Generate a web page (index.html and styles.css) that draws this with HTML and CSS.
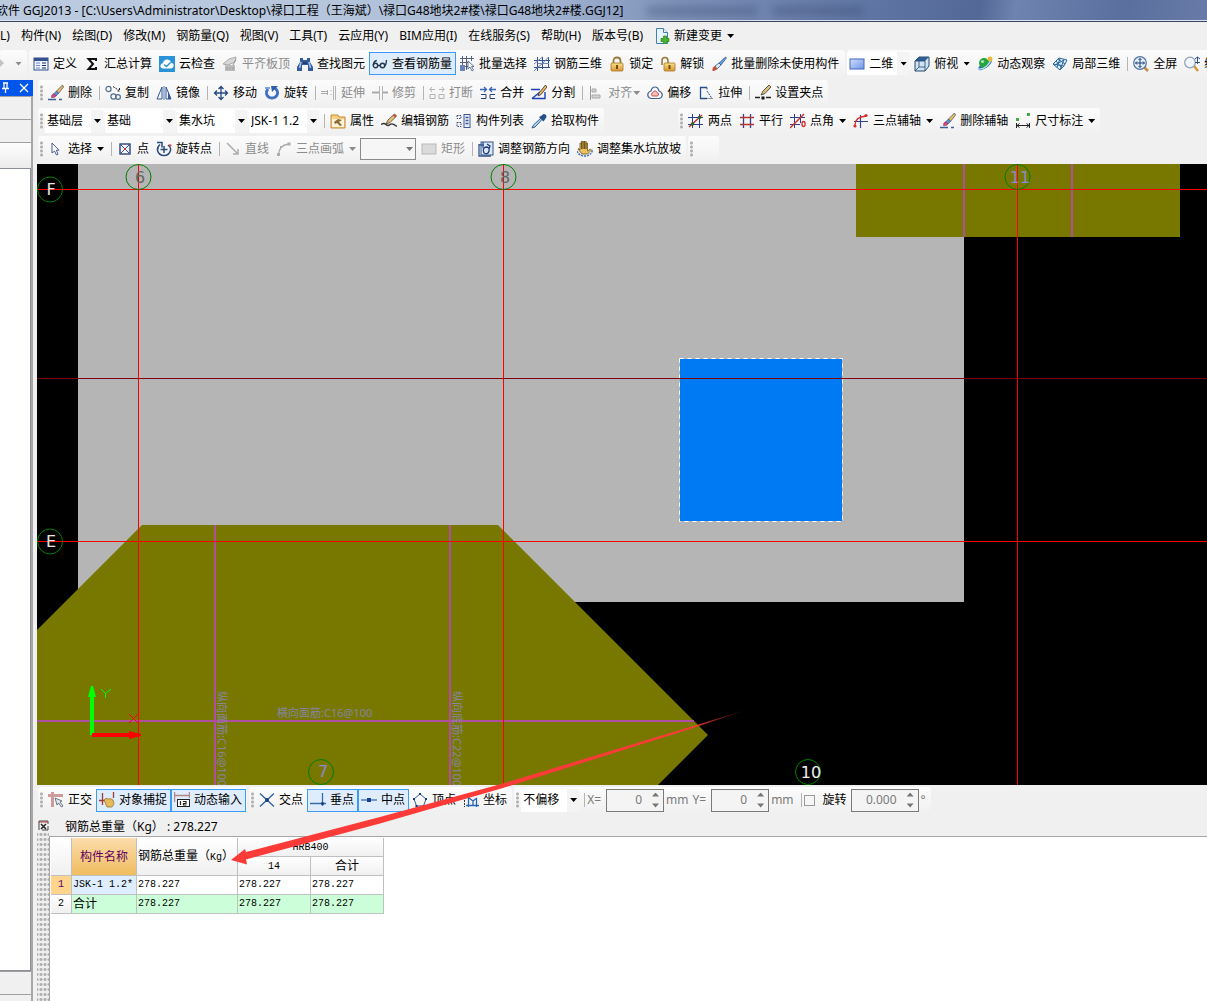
FILE: index.html
```html
<!DOCTYPE html>
<html lang="zh-CN">
<head>
<meta charset="utf-8">
<title>GGJ2013</title>
<link rel="stylesheet" href="styles.css">
</head>
<body>
<svg class="defs" aria-hidden="true">
  <defs>
    <linearGradient id="g-blue" x1="0" y1="0" x2="1" y2="1"><stop offset="0" stop-color="#d3e0fa"/><stop offset="1" stop-color="#6d95ec"/></linearGradient>
    <linearGradient id="g-gold" x1="0" y1="0" x2="0" y2="1"><stop offset="0" stop-color="#fbe08a"/><stop offset="1" stop-color="#d9962c"/></linearGradient>
    <linearGradient id="g-fade" gradientUnits="userSpaceOnUse" x1="751" y1="0" x2="690" y2="0"><stop offset="0" stop-color="#fc3a38" stop-opacity="0"/><stop offset="1" stop-color="#fc3a38"/></linearGradient>
    <symbol id="i-redo" viewBox="0 0 16 16"><path d="M1 12V9q0-4 5-4h3V2l5 5-5 5V8H6q-2 0-2 4z" fill="#c4c4c4"/></symbol>
    <symbol id="i-define" viewBox="0 0 16 16"><rect x="1" y="2" width="14" height="12" fill="#eef3ff" stroke="#35508f"/><path d="M1 3.500h14" stroke="#35508f" stroke-width="3"/><path d="M3 7h4M3 9.500h4M3 12h4" stroke="#6f88c4"/><path d="M9 7h4M9 9.500h4M9 12h4" stroke="#1c2f66"/></symbol>
    <symbol id="i-sum" viewBox="0 0 16 16"><path d="M12 5V3H4.500L9 8l-4.500 5H12v-2" fill="none" stroke="#111" stroke-width="2"/></symbol>
    <symbol id="i-cloud" viewBox="0 0 16 16"><rect width="16" height="16" fill="#2a93d6"/><path d="M4 12.500q-3-.5-2.500-3.200.4-2 2.400-2.100Q4.800 3.500 8 3.500q3.200.1 4 3.300 3 .5 2.700 3-.4 2.500-2.700 2.700z" fill="#fff"/><path d="M5 8.500l2.500 2 4-4" fill="none" stroke="#2a93d6" stroke-width="1.500"/></symbol>
    <symbol id="i-flush" viewBox="0 0 16 16"><path d="M1 8l6-5 7-2-1 5-7 3z" fill="#d8d8d8" stroke="#aaa"/><path d="M3 9h10v6H3z" fill="#bdbdbd"/><path d="M5 11v3M8 11v3M11 11v3M14 3l-3 6" stroke="#999"/></symbol>
    <symbol id="i-find" viewBox="0 0 16 16"><path d="M3 2h3v2h4V2h3v4l3 5v4h-5V9H5v6H0v-4l3-5z" fill="#315b9a"/><path d="M4 6L2.500 12M12 6l1.500 6" stroke="#a9c4ea" stroke-width="1.500"/><path d="M6 6h4v2H6z" fill="#1f3d70"/></symbol>
    <symbol id="i-glasses" viewBox="0 0 16 16"><g fill="none" stroke="#26394f" stroke-width="1.400"><circle cx="3.500" cy="9.500" r="2.200"/><circle cx="10.500" cy="9.500" r="2.200"/><path d="M1.300 9q.5-4 3.500-4.500M12.700 10q1.500-1 1.800-6M5.700 9.500h2.600"/></g></symbol>
    <symbol id="i-batch" viewBox="0 0 16 16"><path d="M1 2.500h14M1 6.500h9M1 10.500h8M3.500 0v15M7.500 0v14M12.500 0v5" stroke="#536081" fill="none"/><path d="M1 9h5v6H1z" fill="#6b84bd"/><path d="M9 5v8l2-2 2 4 1.500-1-2-3.500H15z" fill="#fff" stroke="#44578a" stroke-width=".8"/></symbol>
    <symbol id="i-rebar3d" viewBox="0 0 16 16"><path d="M3.500 1v14M8.500 1v12M14.500 1v11M0 4.500h16M0 11.500h16" stroke="#2f4f90" fill="none"/><path d="M0 15l3.500-3.500 5-4 6-6.500M0 8l8.500-7M3.500 7.500H15" stroke="#6a86bb" fill="none"/></symbol>
    <symbol id="i-lock" viewBox="0 0 16 16"><path d="M4.500 8V5q0-3.500 3.500-3.500T11.500 5v3" fill="none" stroke="#9a7a3a" stroke-width="1.800"/><rect x="2" y="7" width="12" height="8" rx="1" fill="url(#g-gold)" stroke="#a8762a" stroke-width=".8"/><path d="M8 9v4" stroke="#704c10" stroke-width="2"/></symbol>
    <symbol id="i-unlock" viewBox="0 0 16 16"><path d="M2 9V5q0-3.500 3-3.500T8 5v3" fill="none" stroke="#9a7a3a" stroke-width="1.600"/><rect x="4" y="7" width="11" height="8" rx="1" fill="url(#g-gold)" stroke="#a8762a" stroke-width=".8"/><path d="M9.500 9v4" stroke="#704c10" stroke-width="2"/></symbol>
    <symbol id="i-brush" viewBox="0 0 16 16"><path d="M14.500 1L8 7l2 2 5.500-7z" fill="#5da0de" stroke="#23447d" stroke-width=".6"/><path d="M8 7L4 10l2 3 4-4z" fill="#dfe9f6" stroke="#23447d" stroke-width=".7"/><path d="M4 10q-3 1-2.500 5 4-.5 4.500-2z" fill="#c3502f"/></symbol>
    <symbol id="i-delete" viewBox="0 0 16 16"><path d="M0 14.500h8M11 14.500h3" stroke="#3a5f9d" stroke-width="1.600"/><path d="M14.500 0L8.500 6l2 2.500L15.500 2z" fill="#f0bd57" stroke="#4d5b77" stroke-width=".8"/><path d="M8.500 6L6 8.500 8 11l2.500-2.500z" fill="#5d93d6" stroke="#2c4170" stroke-width=".6"/><path d="M6 8.500q-3 1-2.500 4Q7 13 8 11z" fill="#d84a7c" stroke="#6e2750" stroke-width=".5"/></symbol>
    <symbol id="i-rect" viewBox="0 0 16 16"><rect x="1" y="3" width="14" height="10" fill="url(#g-blue)" stroke="#4267b5"/></symbol>
    <symbol id="i-rect-off" viewBox="0 0 16 16"><rect x="1" y="3" width="14" height="10" fill="#dadada" stroke="#b9b9b9"/></symbol>
    <symbol id="i-cube" viewBox="0 0 16 16"><path d="M1 5l4-4h10v9l-4 5H1z" fill="#cfe3f4" stroke="#24486f"/><path d="M1 5l4-4h10l-4 4z" fill="#2e5d90"/><path d="M11 5v10M11 5H1M5 5v6h6M5 11l-4 4" stroke="#24486f" fill="none" stroke-width=".8"/></symbol>
    <symbol id="i-orbit" viewBox="0 0 16 16"><ellipse cx="8" cy="9" rx="8" ry="3" transform="rotate(-35 8 9)" fill="#2b6fa5"/><circle cx="7" cy="7" r="5" fill="#27a343"/><circle cx="5.500" cy="5.500" r="1.600" fill="#a4ecab"/><path d="M1 13Q9 14 14 4" stroke="#b5dcf1" fill="none" stroke-width="1.500"/><circle cx="13" cy="3" r="2.500" fill="#e5ba3c"/></symbol>
    <symbol id="i-part3d" viewBox="0 0 16 16"><path d="M1 8l6-6 8 2-3 6-4 4z" fill="#d8ebf8" stroke="#2c6898"/><path d="M4 5l6 7M8 2.500L5 11.500M12 3.500L8 14M3 9l9-5M1 8l11 2M6 3l7 5" stroke="#2c6898" fill="none"/></symbol>
    <symbol id="i-full" viewBox="0 0 16 16"><path d="M11 11l4 4" stroke="#cf8b3e" stroke-width="2.500"/><circle cx="7" cy="7" r="6.300" fill="#e3effa" stroke="#54759d" stroke-width="1.200"/><path d="M7 2.500v9M2.500 7h9M5.500 4L7 2.500 8.500 4M5.500 10L7 11.500 8.500 10M4 5.500L2.500 7 4 8.500M10 5.500L11.500 7 10 8.500" stroke="#1f3d78" fill="none"/></symbol>
    <symbol id="i-zoom" viewBox="0 0 16 16"><path d="M10 10l4 5" stroke="#d49a3c" stroke-width="2.500"/><circle cx="6" cy="6.500" r="5.300" fill="#f1f7fc" stroke="#91a5bd" stroke-width="1.300"/><path d="M13.500 1v7M11 3l2.500-2L16 3M11 6.500h5" stroke="#2f5487" fill="none"/></symbol>
    <symbol id="i-copy" viewBox="0 0 16 16"><g fill="none" stroke="#54708f" stroke-width="1.200"><circle cx="3.500" cy="4" r="2.600"/><circle cx="8.500" cy="11.500" r="2.600"/><circle cx="13" cy="12" r="2.400"/></g><path d="M8 1.500l6 4M14.500 3v3h-3" stroke="#222" stroke-dasharray="2 1" fill="none"/></symbol>
    <symbol id="i-mirror" viewBox="0 0 16 16"><path d="M6 2v12H1zM10 2v12h5z" fill="#eef3fb" stroke="#315798"/><path d="M8 1v14" stroke="#5b78ae"/><path d="M12 6v8h3z" fill="#315798"/></symbol>
    <symbol id="i-move" viewBox="0 0 16 16"><path d="M8 1.500v13M1.500 8h13M5.500 4L8 1.500 10.500 4M5.500 12L8 14.500l2.500-2.500M4 5.500L1.500 8 4 10.500M12 5.500L14.500 8 12 10.500" stroke="#24497f" stroke-width="1.300" fill="none"/></symbol>
    <symbol id="i-rotate" viewBox="0 0 16 16"><path d="M4 4q-2 2-1.500 5 1.500 4 5.500 4t5.500-4q.5-4-3-6" stroke="#3f6fc3" stroke-width="2.800" fill="none"/><path d="M7 1h7L8 7z" fill="#2f5cab"/><path d="M1 2h5v2H1z" fill="#7fa5e2"/></symbol>
    <symbol id="i-extend" viewBox="0 0 16 16"><path d="M0 6.500h6M0 8.500h6" stroke="#aaa"/><path d="M6.500 5v5M9.500 5.500h1M9.500 9.500h1" stroke="#aaa"/><path d="M12.500 1v14M14.500 1v14" stroke="#b5b5b5"/></symbol>
    <symbol id="i-trim" viewBox="0 0 16 16"><path d="M0 7.500h7M11 7.500h5" stroke="#aaa" stroke-width="2"/><path d="M7.500 1v14M10.500 1v14" stroke="#b5b5b5"/></symbol>
    <symbol id="i-break" viewBox="0 0 16 16"><path d="M1 9.500h5v4H1zM10 9.500h5v4h-5z" fill="none" stroke="#b3b3b3"/><path d="M1 4.500h5M10 4.500h5M3 2L1 4.500 3 7M13 2l2 2.500L13 7" stroke="#b3b3b3" fill="none"/></symbol>
    <symbol id="i-join" viewBox="0 0 16 16"><path d="M1 9.500h5v4H1M15 9.500h-5v4h5" stroke="#2a3e66" fill="none"/><path d="M0 4.500h6M10 4.500h6M4 2l2.500 2.500L4 7M12 2L9.500 4.500 12 7" stroke="#3c62b8" fill="none" stroke-width="1.300"/></symbol>
    <symbol id="i-split" viewBox="0 0 16 16"><path d="M0 4.500h9M1 13.500h13V7M1 13.500L9 7" stroke="#1e3fbd" fill="none" stroke-width="1.400"/><path d="M14.500 0L8 8l-1 3 3-1.500L16 2z" fill="#efb55e" stroke="#30303a" stroke-width=".8"/></symbol>
    <symbol id="i-align" viewBox="0 0 16 16"><path d="M2.500 1v14" stroke="#999"/><path d="M4 4h4v3H4zM4 10h8v3H4z" fill="#d2d2d2" stroke="#aaa"/></symbol>
    <symbol id="i-offset" viewBox="0 0 16 16"><path d="M4 13.500q-4-1-3-5 1-2 3-2.500Q5 2 8 2t4 4q3 1 3.300 4-.5 3.500-4 3.500z" fill="#f7fafc" stroke="#40618c" stroke-width="1.200"/><path d="M5.500 11q-2-1-.5-3 1-.5 1.500-1Q8 4 9.500 7q2.500 1 2 3-.5 1-1.500 1z" fill="#f5c0bc" stroke="#cc4a46"/></symbol>
    <symbol id="i-stretch" viewBox="0 0 16 16"><path d="M9 2.500H2.500v11H9" stroke="#24508f" fill="none" stroke-width="1.300"/><path d="M9 2.500v3M9 6l5 7.500" stroke="#24508f" stroke-dasharray="2 1" fill="none"/><path d="M8.500 13.500H15" stroke="#333" stroke-dasharray="1 1"/></symbol>
    <symbol id="i-grip" viewBox="0 0 16 16"><path d="M0 12.500h5M11 12.500h5" stroke="#222" stroke-width="1.400"/><path d="M6.500 11.500h3v3h-3z" fill="#111"/><path d="M14 0L8 6l-2 4 4-1.500L16 2z" fill="#dfbe78" stroke="#333" stroke-width=".8"/></symbol>
    <symbol id="i-prop" viewBox="0 0 16 16"><path d="M1 2h7l1 2h6v11H1z" fill="#f9cf80" stroke="#c48a34"/><path d="M2 6h12v8H2z" fill="#fdf3db"/><path d="M4 9l4-3 4 1-3 2 3 3-2 1-3-3-2 1z" fill="#8c6b34"/></symbol>
    <symbol id="i-pencil" viewBox="0 0 16 16"><path d="M0 11.500q3-2 5 0t4 0 7 2" stroke="#333" fill="none" stroke-width="1.300"/><path d="M13.500 1L7 7l-2 4 4-1.500L15.500 3z" fill="#e9c27a" stroke="#4a3a2a" stroke-width=".8"/><path d="M13.500 1l2 2-1.500 1.500-2-2z" fill="#c9474c"/></symbol>
    <symbol id="i-list" viewBox="0 0 16 16"><path d="M1 2.500h4v3H1zM1 9.500h4v4H1z" stroke="#35446a" stroke-dasharray="1.500 1" fill="none"/><rect x="8" y="1.500" width="6" height="13" fill="#e9effa" stroke="#3c5995"/><path d="M9.500 4.500h3M9.500 7.500h3M9.500 10.500h3" stroke="#3c5995" stroke-width="1.500"/></symbol>
    <symbol id="i-pick" viewBox="0 0 16 16"><path d="M10 5L2.500 12 1 15l3-1 7-7.500z" fill="#b9d8f2" stroke="#2c5c93"/><path d="M8 4l4.500 4.500 1-1.500 2-3q0-3-3-3L10 3z" fill="#234f8a"/></symbol>
    <symbol id="i-two" viewBox="0 0 16 16"><path d="M4.500 1v14M11.500 1v14M0 4.500h15M0 11.500h15" stroke="#2e3f8a"/><path d="M1 14L14 2" stroke="#c5302b" stroke-width="1.400"/><circle cx="4.500" cy="11" r="1.800" fill="#2b6530"/><circle cx="11.500" cy="4.500" r="1.800" fill="#2b6530"/></symbol>
    <symbol id="i-para" viewBox="0 0 16 16"><path d="M4.500 1v14M11.500 1v14" stroke="#2e3f8a" stroke-width="1.300"/><path d="M1 4.500h14M1 11.500h14" stroke="#b7352f" stroke-width="1.300"/></symbol>
    <symbol id="i-angle" viewBox="0 0 16 16"><path d="M4.500 1v14M10.500 1v9M0 4.500h15M0 11.500h10" stroke="#2e3f8a"/><path d="M0 15L14 1" stroke="#d12d2b" stroke-width="1.500"/><ellipse cx="13.500" cy="11" rx="1.600" ry="2.500" fill="none" stroke="#d12d2b" stroke-width="1.300"/></symbol>
    <symbol id="i-arcaxis" viewBox="0 0 16 16"><path d="M7.500 2v13M1 8.500h14" stroke="#33448b" stroke-width="1.200"/><path d="M2 12q0-8 11-9" stroke="#d3302c" fill="none" stroke-width="1.300"/><circle cx="2" cy="13" r="1.600" fill="#d3302c"/><circle cx="13" cy="2.500" r="1.600" fill="#d3302c"/></symbol>
    <symbol id="i-dim" viewBox="0 0 16 16"><path d="M1 5h3v3H1zM12 0h3v3h-3z" fill="#49a84b"/><path d="M1.500 10v5M14.500 10v5M2 12.500h12M4.500 10.500l-2.500 2 2.500 2M11.500 10.500l2.500 2-2.500 2" stroke="#222" fill="none"/></symbol>
    <symbol id="i-select" viewBox="0 0 16 16"><path d="M4 2v10l2.500-2 2 4 1.500-.8-1.700-4H11z" fill="#fff" stroke="#4a5d92"/></symbol>
    <symbol id="i-point" viewBox="0 0 16 16"><rect x="3" y="3" width="10" height="10" fill="#f3f6fd" stroke="#20356e" stroke-width="1.300"/><path d="M4 4l8 8M12 4l-8 8" stroke="#2c4a9c"/><path d="M7 7h2v2H7z" fill="#c33"/></symbol>
    <symbol id="i-rotpoint" viewBox="0 0 16 16"><path d="M4 3.500Q1 6 1.500 9.500 3 14.500 8 14.500t6.500-5Q15 6 12 4" stroke="#2c4a7c" fill="none" stroke-width="1.500"/><path d="M1 1.500h5v5M8 5v7M4.500 8.500h7" stroke="#2c4a7c" fill="none" stroke-width="1.500"/><path d="M14 6l-1-3 3 1z" fill="#c44"/></symbol>
    <symbol id="i-line" viewBox="0 0 16 16"><path d="M2 2l10 10M13 8v5H8" stroke="#adadad" fill="none" stroke-width="1.500"/></symbol>
    <symbol id="i-arc" viewBox="0 0 16 16"><path d="M2.500 14Q3 4 13 3" stroke="#adadad" fill="none" stroke-width="1.300"/><path d="M1 12h3v3H1zM11.500 1.500h3v3h-3zM4 5h2v2H4z" fill="#adadad"/></symbol>
    <symbol id="i-dir" viewBox="0 0 16 16"><rect x="3" y="1" width="12" height="13" fill="#dbe8f8" stroke="#35558d"/><path d="M1 3v12h12M5 1v6M1 4h5" stroke="#35558d" fill="none" stroke-width="1.300"/><path d="M6 12q-2-5 2-6 4 0 3 4t-5 2M9 3l3 2-1 3" stroke="#203d75" fill="none" stroke-width="1.300"/></symbol>
    <symbol id="i-pit" viewBox="0 0 16 16"><path d="M3 9V2h1.500v6V0H6v8V0h1.500v8V0H9v8V2h1.500v8l3-2 1 1-4 4H5L1 8l1-.5z" fill="#eac15c" stroke="#6d5320" stroke-width=".8"/><path d="M0 10q2 5 8 5t8-7" stroke="#4270b5" fill="none" stroke-width="1.500" stroke-dasharray="2 1"/></symbol>
    <symbol id="i-newdoc" viewBox="0 0 16 16"><path d="M2.500.5h7l4 4v11h-11z" fill="#eaf4fc" stroke="#3c82b8"/><path d="M9.500.5v4h4" fill="#fff" stroke="#3c82b8"/><path d="M9.500 8h3v2.500H15v3h-2.500V16h-3v-2.500H7v-3h2.500z" fill="#46b52a" stroke="#2b7f1a" stroke-width=".7"/></symbol>
    <symbol id="i-ortho" viewBox="0 0 16 16"><path d="M0 3.500h15M4.500 0v15" stroke="#cf9c9c" stroke-width="3"/><path d="M7 6l2 7 1.500-2 3 4 1.500-1-3-4 2-1z" fill="#dfe6ec" stroke="#4f5f6e" stroke-width=".8"/></symbol>
    <symbol id="i-snap" viewBox="0 0 16 16"><path d="M3.500 1v12M0 8.500h7M14.500 0v6" stroke="#9c3b38" stroke-width="1.300"/><path d="M5 8q2-3 4-1 3-1 5 1l1 4-2 3H8z" fill="#e7ba5b" stroke="#8d6a25" stroke-width=".7"/></symbol>
    <symbol id="i-dyn" viewBox="0 0 16 16"><path d="M.5 0v10M15.500 0v6M1 3.500h14" stroke="#b58686" stroke-width="1.400"/><rect x="3.500" y="7.500" width="12" height="7" fill="#fff" stroke="#222"/><path d="M6.500 9v4M9 9.500h3v2H9.500V13h3" stroke="#222" fill="none" stroke-width="1.200"/></symbol>
    <symbol id="i-cross" viewBox="0 0 16 16"><path d="M1 1.500l14 13M15 1.500l-14 13" stroke="#315f9c" stroke-width="1.300"/><circle cx="8" cy="8" r="2" fill="#17407c"/></symbol>
    <symbol id="i-perp" viewBox="0 0 16 16"><path d="M0 11.500h16M12.500 1v13" stroke="#3a6cb0" stroke-width="1.300"/><circle cx="12.500" cy="11.500" r="1.600" fill="#17407c"/></symbol>
    <symbol id="i-mid" viewBox="0 0 16 16"><path d="M0 8h16" stroke="#3a6cb0" stroke-width="1.300"/><rect x="6" y="6" width="4" height="4" fill="#1d3f8f"/></symbol>
    <symbol id="i-vertex" viewBox="0 0 16 16"><path d="M8 2l6 5-2.500 7h-7L2 7z" fill="none" stroke="#315f9c"/><path d="M7 1h2v2H7zM1 6h2v2H1zM13 6h2v2h-2zM3.500 13h2v2h-2zM10.500 13h2v2h-2z" fill="#173b78"/></symbol>
    <symbol id="i-coord" viewBox="0 0 16 16"><path d="M5.500 5v10M3 13.500h13" stroke="#2a66b8" fill="none" stroke-width="1.300"/><path d="M6 6l4 3 4-3M10 9v5M13.500 6v9" stroke="#2a66b8" fill="none" stroke-width="1.300"/><path d="M1 2.500h3M1 5.500h3M12 2.500h3M1.500 8v7M8 1v3" stroke="#333" stroke-dasharray="2 1"/></symbol>
  </defs>
</svg>

<div class="app">
  <header class="titlebar">
    <span class="title-text">软件 GGJ2013 - [C:\Users\Administrator\Desktop\禄口工程（王海斌）\禄口G48地块2#楼\禄口G48地块2#楼.GGJ12]</span>
    <span class="glass-smudge"></span><span class="glass-smudge small"></span>
  </header>

  <nav class="menubar">
    <button class="menu">L)</button><button class="menu">构件(N)</button><button class="menu">绘图(D)</button><button class="menu">修改(M)</button><button class="menu">钢筋量(Q)</button><button class="menu">视图(V)</button><button class="menu">工具(T)</button><button class="menu">云应用(Y)</button><button class="menu">BIM应用(I)</button><button class="menu">在线服务(S)</button><button class="menu">帮助(H)</button><button class="menu">版本号(B)</button><button class="tb"><svg><use href="#i-newdoc"/></svg>新建变更<i class="arrow"></i></button>
  </nav>

  <div class="tool-row main-tools">
    <div class="toolbar"><button class="tb off cut" aria-label="重做"><svg><use href="#i-redo"/></svg><i class="arrow"></i></button></div>
    <div class="toolbar plain">
      <button class="tb"><svg><use href="#i-define"/></svg>定义</button><button class="tb"><svg><use href="#i-sum"/></svg>汇总计算</button><button class="tb"><svg><use href="#i-cloud"/></svg>云检查</button><button class="tb off"><svg><use href="#i-flush"/></svg>平齐板顶</button><button class="tb"><svg><use href="#i-find"/></svg>查找图元</button><button class="tb on"><svg><use href="#i-glasses"/></svg>查看钢筋量</button><button class="tb"><svg><use href="#i-batch"/></svg>批量选择</button><button class="tb"><svg><use href="#i-rebar3d"/></svg>钢筋三维</button><button class="tb"><svg><use href="#i-lock"/></svg>锁定</button><button class="tb"><svg><use href="#i-unlock"/></svg>解锁</button><button class="tb"><svg><use href="#i-brush"/></svg>批量删除未使用构件</button>
    </div>
    <div class="toolbar">
      <button class="combo w-view"><svg><use href="#i-rect"/></svg><span>二维</span><i class="arrow"></i></button><button class="tb"><svg><use href="#i-cube"/></svg>俯视<i class="arrow"></i></button><button class="tb"><svg><use href="#i-orbit"/></svg>动态观察</button><button class="tb"><svg><use href="#i-part3d"/></svg>局部三维</button><i class="sep"></i><button class="tb"><svg><use href="#i-full"/></svg>全屏</button><button class="tb"><svg><use href="#i-zoom"/></svg>缩放</button>
    </div>
  </div>

  <div class="body">
    <aside class="side">
      <div class="side-head">
        <svg class="glyph"><path d="M3 1h5M4 1v5M7 1v5M2 6.500h7M5.500 7v4" stroke="#fff" stroke-width="1.300" fill="none"/></svg>
        <svg class="glyph"><path d="M2 2l8 8M10 2l-8 8" stroke="#fff" stroke-width="1.300"/></svg>
      </div>
      <div class="side-cell"></div><div class="side-cell last"></div>
      <div class="side-strip"></div>
      <div class="side-tree"></div>
      <div class="side-cell"></div><div class="side-cell short"></div>
    </aside>

    <main class="work">
      <div class="tool-row">
        <div class="toolbar"><i class="grip"></i><button class="tb"><svg><use href="#i-delete"/></svg>删除</button><i class="sep"></i><button class="tb"><svg><use href="#i-copy"/></svg>复制</button><button class="tb"><svg><use href="#i-mirror"/></svg>镜像</button><i class="sep"></i><button class="tb"><svg><use href="#i-move"/></svg>移动</button><button class="tb"><svg><use href="#i-rotate"/></svg>旋转</button><i class="sep"></i><button class="tb off"><svg><use href="#i-extend"/></svg>延伸</button><button class="tb off"><svg><use href="#i-trim"/></svg>修剪</button><i class="sep"></i><button class="tb off"><svg><use href="#i-break"/></svg>打断</button><button class="tb"><svg><use href="#i-join"/></svg>合并</button><button class="tb"><svg><use href="#i-split"/></svg>分割</button><i class="sep"></i><button class="tb off tight"><svg><use href="#i-align"/></svg>对齐<i class="arrow"></i></button><button class="tb"><svg><use href="#i-offset"/></svg>偏移</button><button class="tb"><svg><use href="#i-stretch"/></svg>拉伸</button><i class="sep"></i><button class="tb"><svg><use href="#i-grip"/></svg>设置夹点</button></div>
      </div>
      <div class="tool-row">
        <div class="toolbar"><i class="grip"></i><button class="combo w-floor"><span>基础层</span><i class="arrow"></i></button><button class="combo"><span>基础</span><i class="arrow"></i></button><button class="combo"><span>集水坑</span><i class="arrow"></i></button><button class="combo"><span>JSK-1 1.2</span><i class="arrow"></i></button><i class="sep"></i><button class="tb"><svg><use href="#i-prop"/></svg>属性</button><button class="tb"><svg><use href="#i-pencil"/></svg>编辑钢筋</button><button class="tb"><svg><use href="#i-list"/></svg>构件列表</button><button class="tb"><svg><use href="#i-pick"/></svg>拾取构件</button></div>
        <div class="toolbar axis-tools"><i class="grip"></i><button class="tb"><svg><use href="#i-two"/></svg>两点</button><button class="tb"><svg><use href="#i-para"/></svg>平行</button><button class="tb"><svg><use href="#i-angle"/></svg>点角<i class="arrow"></i></button><button class="tb"><svg><use href="#i-arcaxis"/></svg>三点辅轴<i class="arrow"></i></button><button class="tb"><svg><use href="#i-delete"/></svg>删除辅轴</button><button class="tb"><svg><use href="#i-dim"/></svg>尺寸标注<i class="arrow"></i></button></div>
      </div>
      <div class="tool-row">
        <div class="toolbar"><i class="grip"></i><button class="tb"><svg><use href="#i-select"/></svg>选择<i class="arrow"></i></button><i class="sep"></i><button class="tb"><svg><use href="#i-point"/></svg>点</button><button class="tb"><svg><use href="#i-rotpoint"/></svg>旋转点</button><i class="sep"></i><button class="tb off"><svg><use href="#i-line"/></svg>直线</button><button class="tb off"><svg><use href="#i-arc"/></svg>三点画弧<i class="arrow"></i></button><button class="combo framed" aria-label="弧参数"><span></span><i class="arrow"></i></button><button class="tb off"><svg><use href="#i-rect-off"/></svg>矩形</button><i class="sep"></i><button class="tb"><svg><use href="#i-dir"/></svg>调整钢筋方向</button><button class="tb"><svg><use href="#i-pit"/></svg>调整集水坑放坡</button></div>
        <div class="toolbar stub"><i class="grip"></i></div>
      </div>

      <div class="canvas">
        <svg class="drawing">
          <g transform="translate(-37,-164)">
            <rect x="78" y="164" width="886" height="438" fill="#b5b5b5"/>
            <rect x="856" y="164" width="324" height="73" fill="#787800"/>
            <path d="M37 630L142 525H498L708 735L658 785V1600H37z" fill="#787800"/>
            <g fill="#b04f9f"><rect x="963" y="164" width="2" height="73"/><rect x="1071" y="164" width="2" height="73"/><rect x="214" y="525" width="2" height="275"/><rect x="449" y="525" width="2" height="275"/><rect x="37" y="720" width="657" height="2"/></g>
            <rect x="680" y="359" width="162" height="162" fill="#007af2"/>
            <rect x="679.500" y="358.500" width="163" height="163" fill="none" stroke="#fff" stroke-dasharray="4 4"/>
            <g shape-rendering="crispEdges"><path d="M37 189.500H3000M37 541.500H3000M138.500 164V1600M503.500 164V1600M1017.500 164V1600" stroke="#f00"/><path d="M37 378.500H3000" stroke="#800000"/></g>
            <g fill="none" stroke="#008000"><circle cx="50" cy="189.500" r="12.500"/><circle cx="138.500" cy="177" r="12.500"/><circle cx="503.500" cy="177" r="12.500"/><circle cx="1017.500" cy="177" r="12.500"/><circle cx="50" cy="541.500" r="12.500"/><circle cx="321" cy="772" r="12.500"/><circle cx="808" cy="772" r="12.500"/></g>
            <g class="axis-label"><text x="51" y="195" fill="#e6e6e6">F</text><text x="51" y="547" fill="#e6e6e6">E</text><text x="140" y="183" fill="#666">6</text><text x="505" y="183" fill="#666">8</text><text x="1020" y="183" fill="#8a8ac8">11</text><text x="323" y="777" fill="#8a8ac8">7</text><text x="811" y="778" fill="#f0f0f0">10</text></g>
            <g class="bar-label"><text x="277" y="717">横向面筋:C16@100</text><text transform="translate(218,691) rotate(90)">纵向面筋:C16@100</text><text transform="translate(453,691) rotate(90)">纵向底筋:C22@100</text></g>
            <path d="M90 735V697H88L91 686H93L96 697H94V735z" fill="#0f0"/><path d="M92 733H129V731L141 734V736L129 739V737H92z" fill="red"/>
            <path d="M101 689l4.500 4.500L111 689M105.500 693.500V698" fill="none" stroke="#0f0"/><path d="M129 714l9 9M138 714l-9 9" stroke="red"/>
          </g>
        </svg>
      </div>

      <div class="tool-row snap-row">
        <div class="toolbar"><i class="grip"></i><button class="tb"><svg><use href="#i-ortho"/></svg>正交</button><button class="tb on"><svg><use href="#i-snap"/></svg>对象捕捉</button><button class="tb on"><svg><use href="#i-dyn"/></svg>动态输入</button></div>
        <div class="toolbar"><i class="grip"></i><button class="tb"><svg><use href="#i-cross"/></svg>交点</button><button class="tb on"><svg><use href="#i-perp"/></svg>垂点</button><button class="tb on"><svg><use href="#i-mid"/></svg>中点</button><button class="tb"><svg><use href="#i-vertex"/></svg>顶点</button><button class="tb"><svg><use href="#i-coord"/></svg>坐标</button></div>
        <div class="toolbar offset-tools"><i class="grip"></i><button class="combo w-floor"><span>不偏移</span><i class="arrow"></i></button><i class="sep"></i><label for="off-x">X=</label><span class="spin"><input id="off-x" value="0"><i class="updown"></i></span><span class="unit">mm</span><label for="off-y">Y=</label><span class="spin"><input id="off-y" value="0"><i class="updown"></i></span><span class="unit">mm</span><i class="sep"></i><input type="checkbox" id="rot"><label class="dark" for="rot">旋转</label><span class="spin wide"><input id="angle" aria-label="旋转角度" value="0.000"><i class="updown"></i></span><span class="unit">°</span></div>
      </div>

      <section class="dock">
        <div class="dock-rail">
          <button class="dock-close" aria-label="关闭"><svg class="glyph"><path d="M1 1h9v3M1 1v9M10 6v4H4" stroke="#444" fill="none"/><path d="M1 2h9" stroke="#b23b3b"/><path d="M3 4l5 5M8 4L3 9" stroke="#222" stroke-width="1.500"/></svg></button>
          <div class="dock-dots"></div>
        </div>
        <div class="dock-main">
          <p class="dock-title">钢筋总重量（Kg） : 278.227</p>
          <div class="sheet">
            <table>
              <colgroup><col class="c-no"><col class="c-name"><col class="c-total"><col class="c-val"><col class="c-val"></colgroup>
              <thead>
                <tr><th rowspan="2"></th><th rowspan="2" class="active">构件名称</th><th rowspan="2" class="left">钢筋总重量（<span class="num">Kg</span>）</th><th colspan="2"><span class="num">HRB400</span></th></tr>
                <tr><th><span class="num">14</span></th><th>合计</th></tr>
              </thead>
              <tbody>
                <tr><th class="cur num">1</th><td class="picked num">JSK-1 1.2*</td><td class="num">278.227</td><td class="num">278.227</td><td class="num">278.227</td></tr>
                <tr class="sum"><th class="num">2</th><td>合计</td><td class="num">278.227</td><td class="num">278.227</td><td class="num">278.227</td></tr>
              </tbody>
            </table>
          </div>
        </div>
      </section>

      <svg class="pointer" viewBox="0 0 760 301" aria-hidden="true"><g transform="translate(0,-700)"><path d="M690 727L751 708.500L690 729z" fill="url(#g-fade)"/><path d="M690 727L503 783.500L380 817L246 852L245 849L231 860L247 864.500L246 859.500L380 823.500L503 788L690 729z" fill="#fc3a38"/></g></svg>
    </main>
  </div>
</div>
</body>
</html>
```
FILE: styles.css
```css
* { box-sizing: border-box; }

body {
  margin: 0;
  background: #f0f0f0;
  color: #000;
  font: 12px/16px "Noto Sans", "Noto Sans CJK SC", sans-serif;
}

.defs { position: absolute; width: 0; height: 0; }

button {
  border: 0;
  background: none;
  color: inherit;
  font: inherit;
  white-space: nowrap;
}

.app {
  display: flex;
  flex-direction: column;
  min-height: 100vh;
  overflow: hidden;
}

/* title and menu */
.titlebar {
  display: flex;
  align-items: center;
  height: 22px;
  border-bottom: 1px solid #3c4560;
  background: linear-gradient(100deg, #bccbe0 0, #b5c5dc 28%, #9fb2d0 46%, #7d91b8 56%, #5f75a4 72%, #536896 81%, #6f83b0 84%, #5a6f9e 93%, #687ba8 100%);
  box-shadow: inset 0 -1px #dfe5ee;
  white-space: nowrap;
}
.title-text {
  margin-left: -4px;
  font-family: "Noto Sans", "Noto Sans CJK SC", sans-serif;
  text-spacing-trim: space-all;
}
.glass-smudge {
  width: 110px;
  height: 8px;
  margin-left: 24px;
  background: #2d3d60;
  opacity: .35;
  filter: blur(4px);
}
.glass-smudge.small { width: 90px; margin-left: 16px; }

.menubar {
  display: flex;
  align-items: center;
  height: 28px;
  overflow: hidden;
}
.menu { flex: none; padding: 0 11px 0 0; }
.menubar .tb { padding-left: 0; }

/* toolbars */
.tool-row {
  display: flex;
  gap: 2px;
  height: 28px;
  overflow: hidden;
}
.main-tools { flex: none; height: 30px; }
.toolbar {
  display: flex;
  flex: none;
  align-items: center;
  height: 27px;
  padding-right: 1px;
  border-radius: 3px;
  background: linear-gradient(#fcfcfc, #f0f0f0);
}
.toolbar.plain { padding-right: 2px; padding-left: 1px; }
.work .toolbar { height: 26px; }
.axis-tools { margin-left: 72px; }

.tb {
  display: flex;
  flex: none;
  align-items: center;
  height: 23px;
  padding: 0 4px 0 3px;
}
.tb svg, .combo svg {
  flex: none;
  width: 16px;
  height: 16px;
  margin-right: 4px;
}
.tb.on {
  padding: 0 3px 0 2px;
  border: 1px solid #3c9bf5;
  background: #deecfb;
}
.tb.off { color: #8c8c8c; }
.tb.cut { margin-left: -13px; }

.arrow {
  flex: none;
  width: 7px;
  height: 4px;
  margin-left: 5px;
  background: currentColor;
  clip-path: polygon(0 0, 100% 0, 50% 100%);
}
.tight .arrow { margin-left: 1px; }

.combo {
  display: flex;
  flex: none;
  align-items: center;
  width: 70px;
  height: 23px;
  margin-right: 2px;
  padding: 0 2px;
  background: linear-gradient(90deg, #fff calc(100% - 12px), #f4f4f4 0);
}
.combo span { flex: 1; overflow: hidden; text-align: left; }
.combo .arrow { margin-left: 3px; }
.combo.w-floor { width: 58px; }
.combo.w-view { width: 62px; }
.combo.framed {
  width: 56px;
  height: 22px;
  border: 1px solid #8a8a8a;
  background: #f6f6f6;
  color: #777;
}

.sep {
  flex: none;
  width: 6px;
  height: 14px;
  background: linear-gradient(#b4b4b4, #b4b4b4) 3px 0 / 1px 100% no-repeat;
}
.grip {
  flex: none;
  width: 7px;
  height: 16px;
  background: radial-gradient(circle, #b0b0b0 1px, transparent 2px) 2px 0 / 3px 4px repeat-y;
}
.toolbar.stub { width: 31px; }

/* left panel */
.body { display: flex; flex: 1; }
.side {
  display: flex;
  flex: none;
  flex-direction: column;
  width: 33px;
  border-right: 2px solid #a7a7a7;
}
.side-head {
  display: flex;
  gap: 6px;
  height: 16px;
  margin-right: -2px;
  padding-top: 2px;
  background: #0055ea;
}
.glyph { flex: none; width: 12px; height: 12px; }
.side-cell {
  height: 23px;
  border-top: 1px solid #a0a0a0;
}
.side-cell.last { height: 24px; border-bottom: 1px solid #a0a0a0; }
.side-cell.short { height: 7px; }
.side-strip { height: 25px; background: linear-gradient(#fdfdfd, #ececec); }
.side-tree {
  flex: 1;
  border: 1px solid #8a8f99;
  border-left: 0;
  background: #fff;
}

/* work area */
.work {
  position: relative;
  display: flex;
  flex: 1;
  flex-direction: column;
  min-width: 0;
  padding-left: 4px;
}
.work .tool-row { flex: none; padding-left: 1px; }
.canvas { position: relative; flex: 1; min-height: 300px; background: #000; }
.drawing {
  position: absolute;
  top: 0;
  left: 0;
  width: 100%;
  height: 100%;
}
.axis-label { font: 16px "DejaVu Sans", sans-serif; text-anchor: middle; }
.bar-label { font-size: 11px; fill: #8585a2; }

.work .snap-row { height: 30px; padding-top: 2px; }
.offset-tools label { margin-right: 5px; color: #7a7a7a; }
.unit { margin: 0 4px 0 2px; color: #7a7a7a; }
.offset-tools .dark { margin: 0 4px 0 8px; color: #000; }
.spin {
  display: flex;
  align-items: center;
  width: 58px;
  height: 23px;
  padding-right: 4px;
  border: 1px solid #7a7a7a;
  background: #f4f4f4;
}
.spin.wide { width: 68px; }
.spin input {
  flex: 1;
  min-width: 0;
  padding: 0 10px 0 0;
  border: 0;
  background: none;
  color: #7a7a7a;
  font: inherit;
  text-align: right;
}
.updown {
  width: 7px;
  height: 15px;
  background: #777;
  clip-path: polygon(50% 0, 100% 4px, 100% 11px, 50% 15px, 0 11px, 100% 11px, 100% 4px, 0 4px);
}
.offset-tools input[type="checkbox"] {
  appearance: none;
  width: 11px;
  height: 11px;
  margin: 0;
  border: 1px solid #9a9a9a;
  background: #f6f6f6;
}

/* bottom dock */
.dock { display: flex; flex: none; min-height: 186px; }
.dock-rail {
  display: flex;
  flex: none;
  flex-direction: column;
  width: 12px;
}
.dock-close { height: 17px; padding: 4px 0 0 1px; }
.dock-close svg { display: block; }
.dock-dots {
  flex: 1;
  background: radial-gradient(circle, #b0b0b0 1px, transparent 2px) 2px 0 / 4px 5px;
}
.dock-main { display: flex; flex: 1; flex-direction: column; }
.dock-title { margin: 0; padding: 4px 0 1px 16px; }
.sheet {
  flex: 1;
  padding: 1px;
  border: solid #a6a6a6;
  border-width: 1px 0 0 1px;
  background: #fff;
}
table {
  width: 333px;
  border-collapse: separate;
  border-spacing: 0;
  table-layout: fixed;
}
.c-no { width: 21px; }
.c-name { width: 65px; }
.c-total { width: 101px; }
.c-val { width: 73px; }
th, td {
  height: 19px;
  padding: 0 1px;
  border: solid #c0c0c0;
  border-width: 0 1px 1px 0;
  font-weight: normal;
  line-height: 16px;
  text-align: left;
  white-space: nowrap;
}
th { background: linear-gradient(#fff, #f0f0f0); text-align: center; }
th.left { text-align: left; }
th.active { background: linear-gradient(#fbdcab, #f0bd60); color: #600060; }
th.cur { background: #ffd48c; color: #600060; }
td.picked { background: #deeeff; }
.sum td { background: #ccffd9; }
.num { font-family: "Liberation Mono", monospace; font-size: 10px; }

.pointer {
  position: absolute;
  bottom: 0;
  left: -33px;
  width: 760px;
  height: 301px;
  pointer-events: none;
}
```
